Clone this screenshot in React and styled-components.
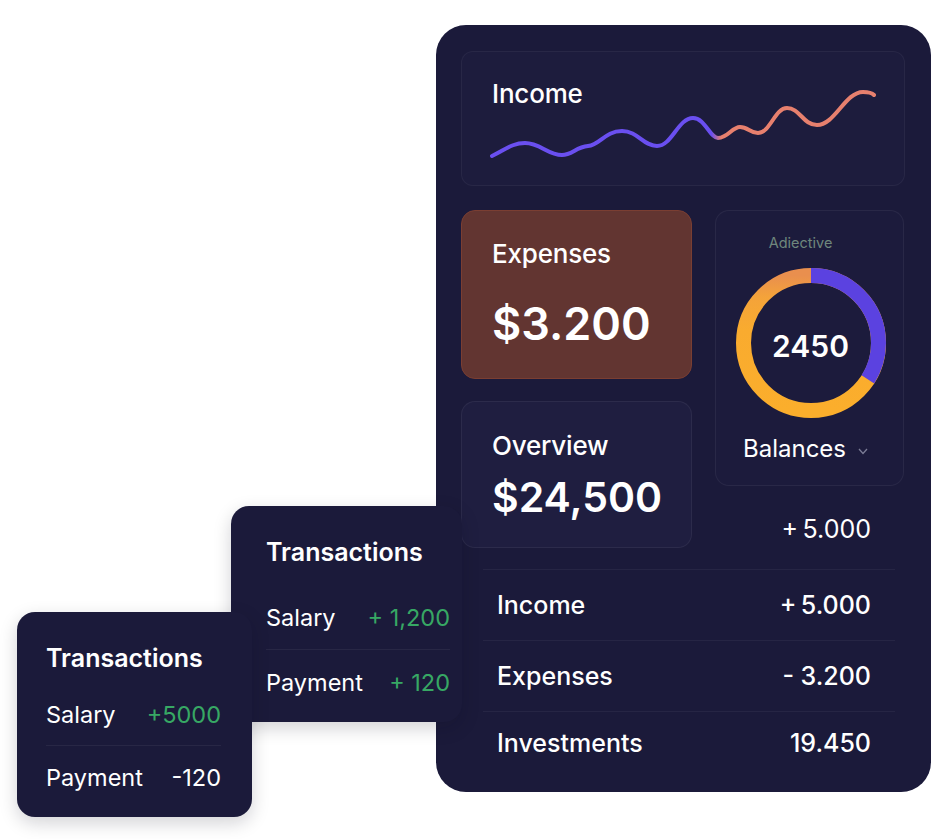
import React from 'react'
import styled, { createGlobalStyle } from 'styled-components'

const GlobalStyle = createGlobalStyle`
  html, body {
    margin: 0;
    background: #ffffff;
  }
  body {
    font-family: Inter, "Noto Sans", sans-serif;
    color: #ffffff;
  }
`

const rows = [
  { label: 'Income', value: '+\u20095.000', h: 70 },
  { label: 'Expenses', value: '- 3.200', h: 70 },
  { label: 'Investments', value: '19.450', h: 62 },
]

const Wave = () => (
  <WaveSvg viewBox="461 51 444 135" width="444" height="135">
    <defs>
      <linearGradient id="waveGrad" gradientUnits="userSpaceOnUse" x1="492" y1="0" x2="874" y2="0">
        <stop offset="0" stopColor="#6a4ff0" />
        <stop offset="0.575" stopColor="#6a4ff0" />
        <stop offset="0.6" stopColor="#e7806e" />
        <stop offset="1" stopColor="#e7806e" />
      </linearGradient>
    </defs>
    <path
      d="M492,156 C505,150 512,143 525,143 C540,143 548,155 562,155 C572,155 576,147 588,146 C600,145 605,131 622,131 C638,131 643,146 657,146 C672,146 678,118 693,118 C705,118 710,138 718,138 C728,138 732,127 740,127 C748,127 750,133 758,133 C770,133 775,108 787,108 C800,108 803,125 817,125 C835,125 845,92 863,92 C868,92 872,93 874,95"
      fill="none"
      stroke="url(#waveGrad)"
      strokeWidth="4"
      strokeLinecap="round"
    />
  </WaveSvg>
)

const Donut = () => {
  const r = 67.5
  const c = 2 * Math.PI * r
  const purple = c * 0.34
  return (
    <DonutWrap>
      <svg width="152" height="152" viewBox="0 0 152 152">
        <defs>
          {/* the ring is rotated -90deg, so local x runs bottom → top on screen */}
          <linearGradient id="orangeGrad" x1="1" y1="0.5" x2="0" y2="0.5">
            <stop offset="0" stopColor="#e98f4e" />
            <stop offset="0.16" stopColor="#f4a33a" />
            <stop offset="0.4" stopColor="#f9ab2f" />
            <stop offset="1" stopColor="#fbae2c" />
          </linearGradient>
        </defs>
        <g transform="rotate(-90 76 76)">
          <circle cx="76" cy="76" r={r} fill="none" stroke="url(#orangeGrad)" strokeWidth="15" />
          <circle
            cx="76"
            cy="76"
            r={r}
            fill="none"
            stroke="#5b42e0"
            strokeWidth="15"
            strokeDasharray={`${purple} ${c}`}
          />
        </g>
      </svg>
      <DonutValue>2450</DonutValue>
    </DonutWrap>
  )
}

const App = () => {
  return (
    <>
      <GlobalStyle />
      <Stage>
        <Panel>
          <IncomeCard>
            <CardTitle $top={27}>Income</CardTitle>
            <Wave />
          </IncomeCard>

          <StatsGrid>
            <LeftCol>
              <StatCard $tone="warm" $h={169}>
                <CardTitle $top={28}>Expenses</CardTitle>
                <BigValue $size={45} $gap={30}>$3.200</BigValue>
              </StatCard>
              <StatCard $h={147}>
                <CardTitle $top={29}>Overview</CardTitle>
                <BigValue $size={41} $gap={14}>$24,500</BigValue>
              </StatCard>
            </LeftCol>
            <RightCol>
              <BalanceCard>
                <Caption>Adiective</Caption>
                <Donut />
                <BalanceLabel>
                  Balances
                  <svg width="10" height="7" viewBox="0 0 10 7">
                    <polyline points="1,1 5,5.5 9,1" fill="none" stroke="#7c7d96" strokeWidth="1.3" />
                  </svg>
                </BalanceLabel>
              </BalanceCard>
              <ExtraValue>+{'\u2009'}5.000</ExtraValue>
            </RightCol>
          </StatsGrid>

          <SummaryList>
            {rows.map(row => (
              <SummaryRow key={row.label} $h={row.h}>
                <span>{row.label}</span>
                <span>{row.value}</span>
              </SummaryRow>
            ))}
          </SummaryList>
        </Panel>

        <TxCard $left={231} $top={506} $w={231} $h={216} $pl={35} $pr={12}>
          <TxTitle $mb={18}>Transactions</TxTitle>
          <TxRow $h={64}>
            <span>Salary</span>
            <Amount $positive>+ 1,200</Amount>
          </TxRow>
          <TxRow $h={64}>
            <span>Payment</span>
            <Amount $positive>+ 120</Amount>
          </TxRow>
        </TxCard>

        <TxCard $left={17} $top={612} $w={235} $h={205} $pl={29} $pr={31}>
          <TxTitle $mb={10}>Transactions</TxTitle>
          <TxRow $h={62}>
            <span>Salary</span>
            <Amount $positive>+5000</Amount>
          </TxRow>
          <TxRow $h={62}>
            <span>Payment</span>
            <Amount>-120</Amount>
          </TxRow>
        </TxCard>
      </Stage>
    </>
  )
}

export default App

const Stage = styled.div`
  position: relative;
  width: 951px;
  height: 839px;
  padding: 25px 0 0 436px;
  box-sizing: border-box;
  overflow: hidden;
`

const Panel = styled.div`
  width: 495px;
  height: 767px;
  box-sizing: border-box;
  padding: 26px 26px 0 25px;
  background: #1b1a3a;
  border-radius: 30px;
  display: flex;
  flex-direction: column;
`

const IncomeCard = styled.div`
  height: 135px;
  box-sizing: border-box;
  border-radius: 12px;
  border: 1px solid rgba(255, 255, 255, 0.05);
  background: #1d1c3d;
  display: grid;
  overflow: hidden;

  & > * {
    grid-area: 1 / 1;
  }
`

const WaveSvg = styled.svg`
  display: block;
  margin: -1px;
`

const CardTitle = styled.div`
  font-size: 26px;
  font-weight: 500;
  line-height: 30px;
  letter-spacing: -0.2px;
  padding: ${p => p.$top}px 0 0 30px;
  position: relative;
  z-index: 1;
`

const StatsGrid = styled.div`
  display: grid;
  grid-template-columns: 231px 189px;
  column-gap: 23px;
  margin-top: 24px;
`

const LeftCol = styled.div`
  display: flex;
  flex-direction: column;
  gap: 22px;
`

const RightCol = styled.div`
  display: flex;
  flex-direction: column;
`

const StatCard = styled.div`
  height: ${p => p.$h}px;
  box-sizing: border-box;
  border-radius: 14px;
  background: ${p => (p.$tone === 'warm' ? '#623531' : '#1f1e40')};
  border: 1px solid ${p => (p.$tone === 'warm' ? '#7a3e32' : 'rgba(255, 255, 255, 0.06)')};
`

const BigValue = styled.div`
  font-size: ${p => p.$size}px;
  font-weight: 600;
  line-height: 1.1;
  letter-spacing: 0;
  padding-left: 30px;
  margin-top: ${p => p.$gap}px;
`

const BalanceCard = styled.div`
  height: 276px;
  box-sizing: border-box;
  border-radius: 14px;
  background: #1c1b3c;
  border: 1px solid rgba(255, 255, 255, 0.06);
  display: flex;
  flex-direction: column;
  align-items: center;
  padding-top: 23px;
`

const Caption = styled.div`
  font-size: 14.5px;
  line-height: 18px;
  color: #6f877c;
  margin-left: -18px;
`

const DonutWrap = styled.div`
  display: grid;
  place-items: center;
  margin-top: 15px;
  margin-left: 2px;

  & > * {
    grid-area: 1 / 1;
  }

  svg {
    display: block;
  }
`

const DonutValue = styled.div`
  font-size: 30px;
  font-weight: 600;
  margin-top: 6px;
`

const BalanceLabel = styled.div`
  display: flex;
  align-items: center;
  gap: 12px;
  margin-top: 15px;
  margin-right: 8px;
  font-size: 24px;
  line-height: 30px;

  svg {
    margin-top: 4px;
  }
`

const ExtraValue = styled.div`
  text-align: right;
  padding-right: 33px;
  margin-top: 28px;
  font-size: 25px;
  line-height: 30px;
`

const SummaryList = styled.div`
  margin: 21px 10px 0 22px;
`

const SummaryRow = styled.div`
  height: ${p => p.$h}px;
  display: flex;
  align-items: center;
  justify-content: space-between;
  padding: 0 24px 0 14px;
  border-top: 1px solid rgba(255, 255, 255, 0.05);
  font-size: 25px;
  font-weight: 500;
`

const TxCard = styled.div`
  position: absolute;
  left: ${p => p.$left}px;
  top: ${p => p.$top}px;
  width: ${p => p.$w}px;
  height: ${p => p.$h}px;
  box-sizing: border-box;
  padding: 32px ${p => p.$pr}px 0 ${p => p.$pl}px;
  background: #1b1a3a;
  border-radius: 18px;
  box-shadow: 0 6px 18px rgba(10, 10, 30, 0.18);
`

const TxTitle = styled.div`
  font-size: 25px;
  font-weight: 600;
  line-height: 29px;
  margin-bottom: ${p => p.$mb}px;
`

const TxRow = styled.div`
  height: ${p => p.$h}px;
  display: flex;
  align-items: center;
  justify-content: space-between;
  font-size: 23.5px;

  & + & {
    border-top: 1px solid rgba(255, 255, 255, 0.06);
  }
`

const Amount = styled.span`
  color: ${p => (p.$positive ? '#37a864' : '#ffffff')};
`
